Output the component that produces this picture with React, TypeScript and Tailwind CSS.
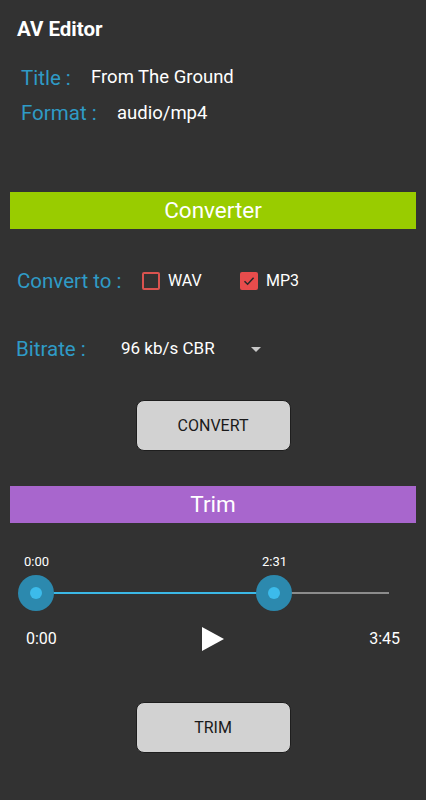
import { useState } from "react";

const labelCls = "text-[#2f9bc6] text-[20.5px]";

function Checkbox({ checked }: { checked: boolean }) {
  return checked ? (
    <div className="w-[18px] h-[18px] rounded-[2px] bg-[#e84c4c] flex items-center justify-center">
      <svg viewBox="0 0 18 18" className="w-[18px] h-[18px]">
        <path d="M4.5 9.2 L7.6 12.2 L13.6 5.8" fill="none" stroke="#2a2a2a" strokeWidth="1.6" />
      </svg>
    </div>
  ) : (
    <div className="w-[18px] h-[18px] rounded-[2px] border-2 border-[#d9534f]" />
  );
}

export default function App() {
  const [wav, setWav] = useState(false);
  const [mp3, setMp3] = useState(true);

  const btnCls = "w-[155px] h-[51px] rounded-[8px] bg-[#d2d2d2] border border-[#1e1e1e] text-[#1a1a1a] text-[16px]";

  return (
    <div className="w-[426px] h-[800px] bg-[#323232] text-white font-['Roboto',sans-serif] overflow-hidden">
      {/* Toolbar */}
      <div className="h-[58px] flex items-center px-[17px]">
        <h1 className="text-[20.5px] font-bold">AV Editor</h1>
      </div>

      {/* File info */}
      <div className="px-[21px]">
        <div className="flex items-center h-[36px] mt-[2px]">
          <span className={`${labelCls} w-[70px]`}>Title :</span>
          <span className="text-[18.5px]">From The Ground</span>
        </div>
        <div className="flex items-center h-[35px]">
          <span className={`${labelCls} w-[96px]`}>Format :</span>
          <span className="text-[18.5px]">audio/mp4</span>
        </div>
      </div>

      {/* Converter */}
      <div className="mx-[10px] mt-[61px] h-[37px] bg-[#99cc00] flex items-center justify-center">
        <span className="text-[22.5px]">Converter</span>
      </div>

      <div className="flex items-center h-[36px] mt-[34px] px-[17px]">
        <span className={`${labelCls} w-[125px]`}>Convert to :</span>
        <button onClick={() => setWav(v => !v)} className="flex items-center gap-[8px] w-[98px]">
          <Checkbox checked={wav} />
          <span className="text-[16px]">WAV</span>
        </button>
        <button onClick={() => setMp3(v => !v)} className="flex items-center gap-[8px]">
          <Checkbox checked={mp3} />
          <span className="text-[16px]">MP3</span>
        </button>
      </div>

      <div className="flex items-center h-[36px] mt-[32px] px-[16px]">
        <span className={`${labelCls} w-[105px]`}>Bitrate :</span>
        <span className="text-[17px] w-[130px]">96 kb/s CBR</span>
        <svg viewBox="0 0 10 5" className="w-[10px] h-[5px]">
          <path d="M0 0 L10 0 L5 5 Z" fill="#c8c8c8" />
        </svg>
      </div>

      <div className="flex justify-center mt-[33px]">
        <button className={btnCls}>CONVERT</button>
      </div>

      {/* Trim */}
      <div className="mx-[10px] mt-[35px] h-[37px] bg-[#a866cd] flex items-center justify-center">
        <span className="text-[22.5px]">Trim</span>
      </div>

      <div className="relative h-[75px] mt-[26px]">
        <span className="absolute left-[24px] top-[3px] text-[13px]">0:00</span>
        <span className="absolute left-[262px] top-[3px] text-[13px]">2:31</span>
        <div className="absolute left-[36px] w-[353px] top-[43px] h-[2px] bg-[#8c8c8c]" />
        <div className="absolute left-[36px] w-[238px] top-[43px] h-[2px] bg-[#3bb8e6]" />
        <div className="absolute left-[18px] top-[26px] w-[36px] h-[36px] rounded-full bg-[#2c89ae] flex items-center justify-center">
          <div className="w-[12px] h-[12px] rounded-full bg-[#3cbbeb]" />
        </div>
        <div className="absolute left-[256px] top-[26px] w-[36px] h-[36px] rounded-full bg-[#2c89ae] flex items-center justify-center">
          <div className="w-[12px] h-[12px] rounded-full bg-[#3cbbeb]" />
        </div>
      </div>

      <div className="flex items-center justify-between h-[30px] px-[26px]">
        <span className="text-[16px]">0:00</span>
        <svg viewBox="0 0 22 24" className="w-[22px] h-[24px]">
          <path d="M0 0 L22 12 L0 24 Z" fill="#ffffff" />
        </svg>
        <span className="text-[16px]">3:45</span>
      </div>

      <div className="flex justify-center mt-[48px]">
        <button className={btnCls}>TRIM</button>
      </div>
    </div>
  );
}
